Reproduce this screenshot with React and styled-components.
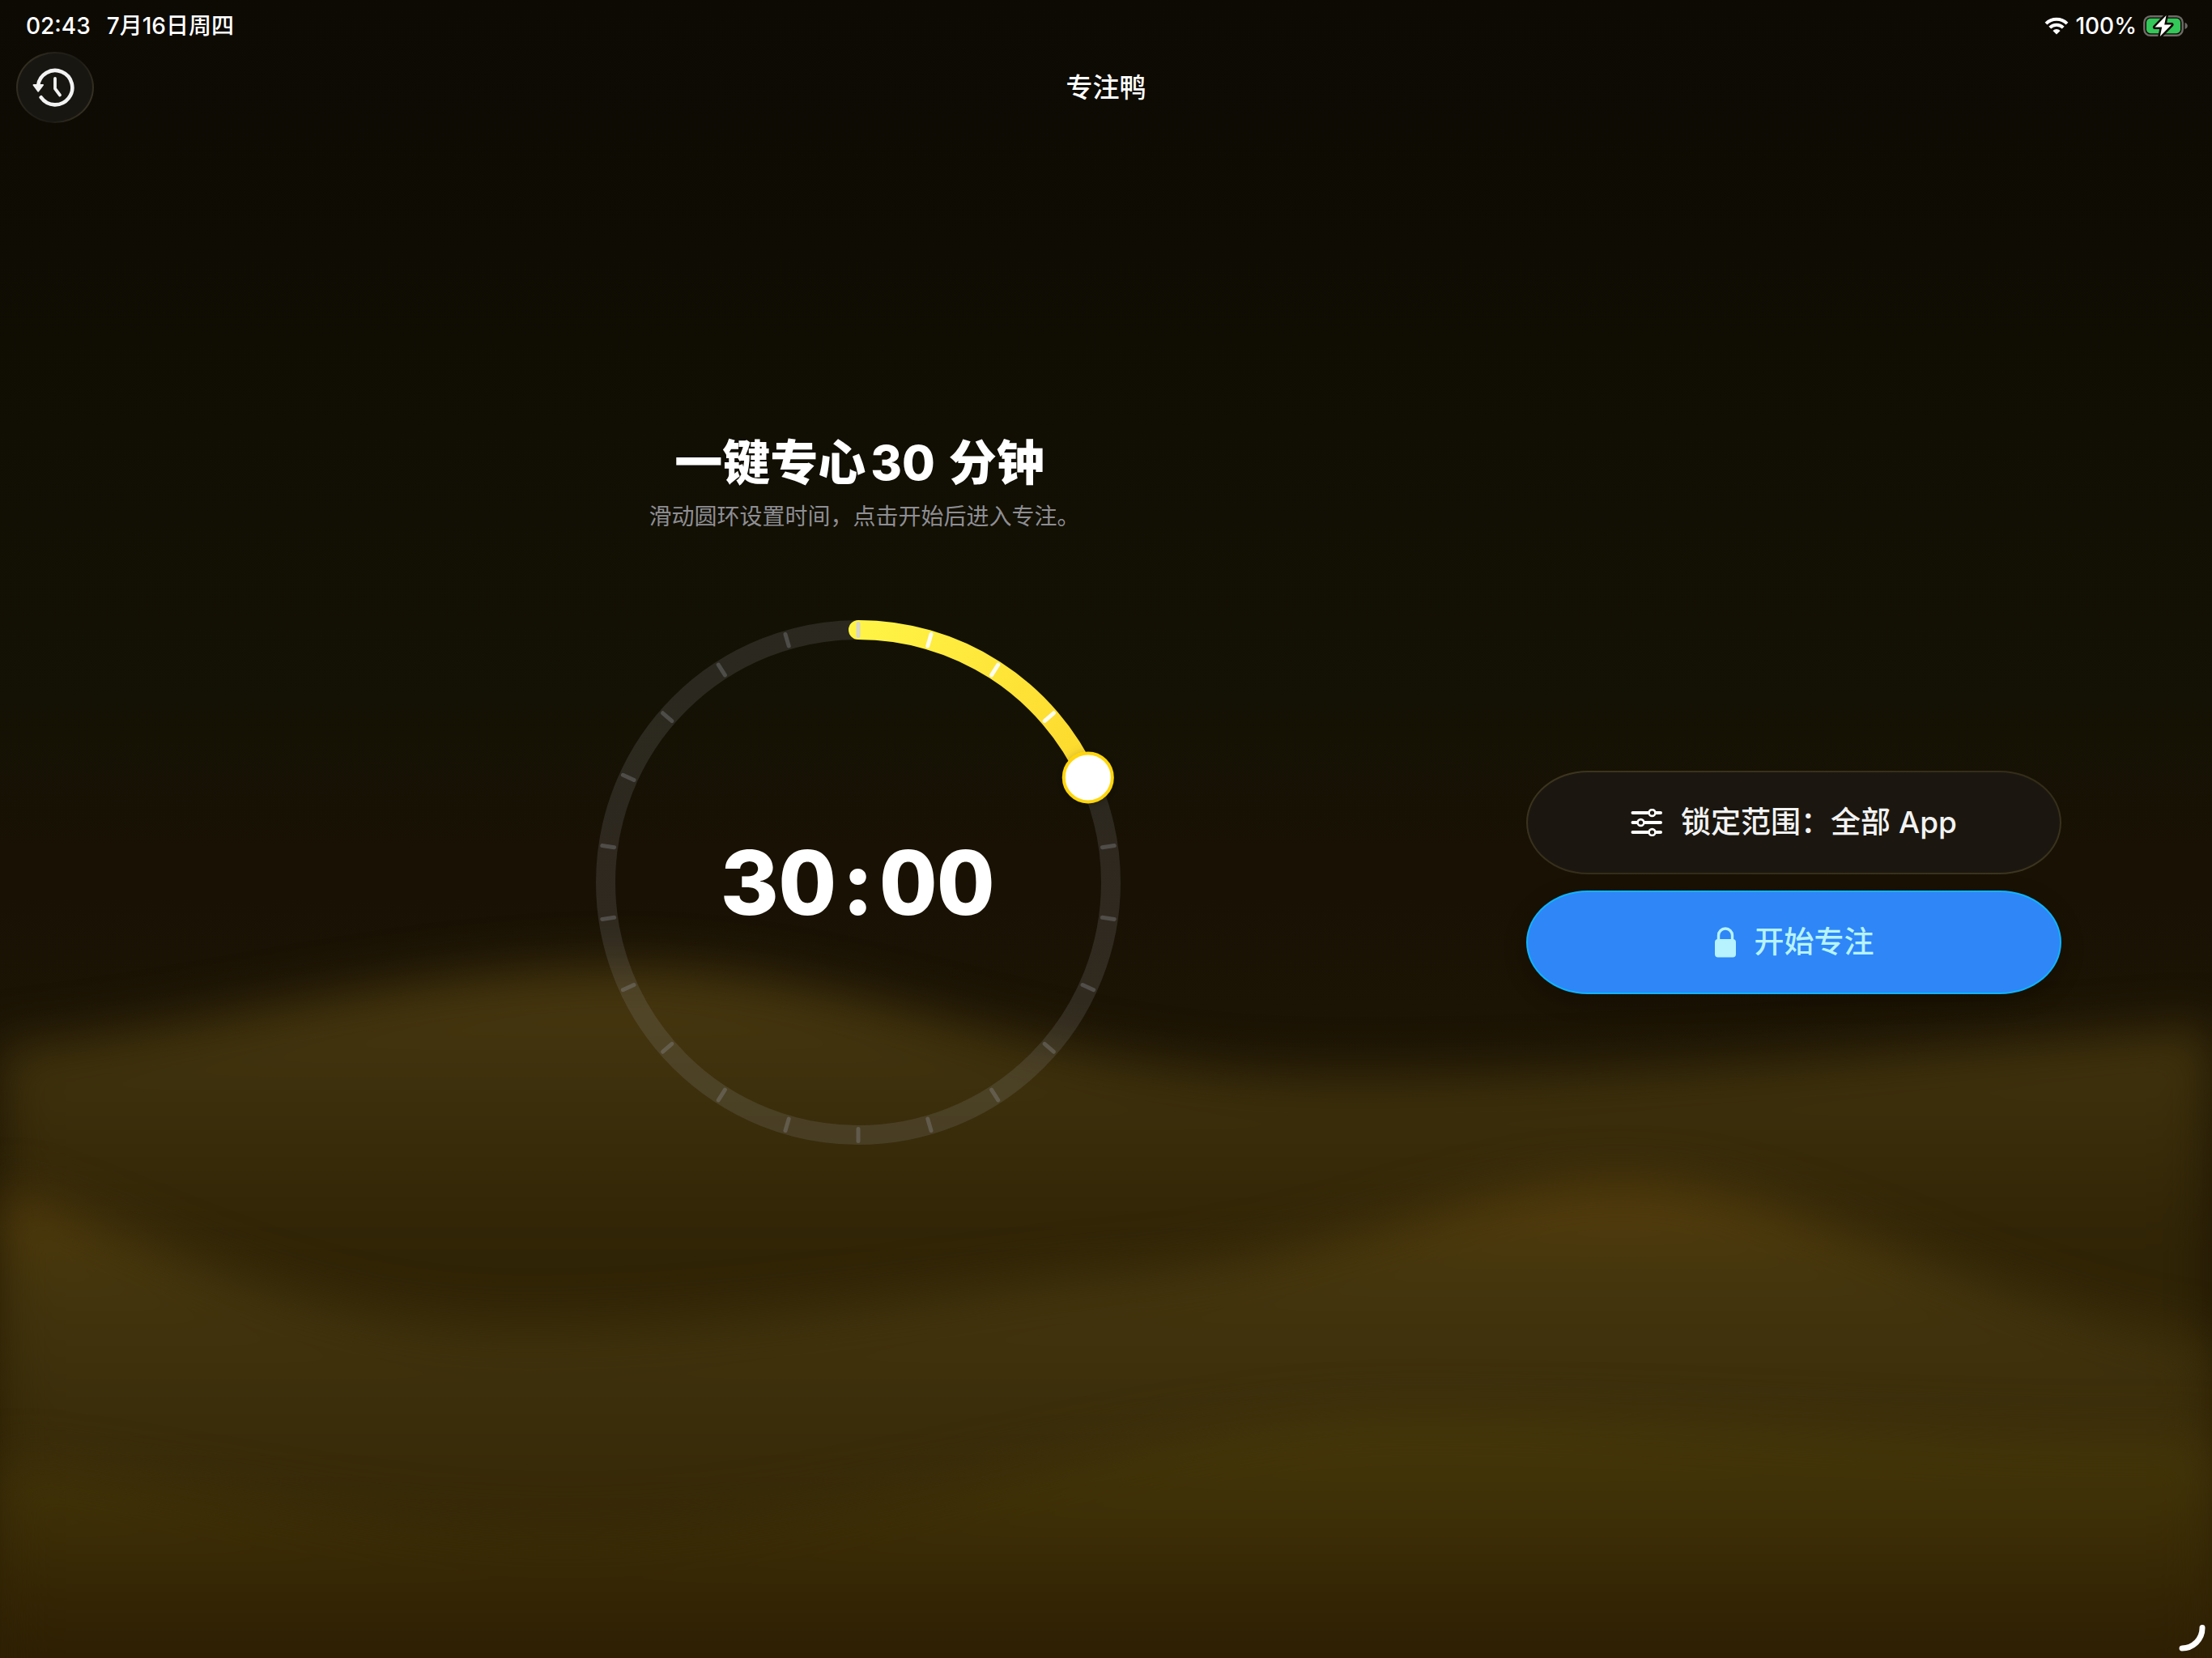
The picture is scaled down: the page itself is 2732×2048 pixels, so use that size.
import { useState } from "react"
import styled, { createGlobalStyle } from "styled-components"

const MIN = 10
const MAX = 120
const STEP = 5
const TICKS = (MAX - MIN) / STEP

const SIZE = 720
const CENTER = SIZE / 2
const RADIUS = 312

const GlobalStyle = createGlobalStyle`
  *, *::before, *::after {
    box-sizing: border-box;
    margin: 0;
  }

  body {
    background-color: #0d0a03;
    color: #fff;
    font-family: Inter, "Noto Sans CJK SC", sans-serif;
  }

  button {
    font: inherit;
    cursor: pointer;
  }
`

const Screen = styled.div`
  position: relative;
  isolation: isolate;
  display: flex;
  flex-direction: column;
  min-height: 100vh;
  padding-bottom: 20px;
  overflow: hidden;
  background: linear-gradient(#0d0a04 0%, #0f0c03 15%, #141204 42%, #181104 51%, #1c1404 64%, #241903 100%);
`

const Backdrop = styled.svg`
  position: absolute;
  inset: 0;
  z-index: -1;
  width: 100%;
  height: 100%;
`

const StatusBar = styled.div`
  display: flex;
  align-items: center;
  justify-content: space-between;
  height: 64px;
  padding: 0 30px 0 32px;
  font-size: 28px;
  font-weight: 500;
  line-height: 32px;
`

const StatusGroup = styled.div`
  display: flex;
  align-items: center;
  gap: ${({ $gap }) => $gap}px;
`

const NavBar = styled.header`
  display: grid;
  grid-template-columns: 1fr auto 1fr;
  align-items: center;
  padding: 0 20px;
`

const NavTitle = styled.h1`
  font-size: 33px;
  font-weight: 500;
  line-height: 40px;
`

const HistoryButton = styled.button`
  display: flex;
  align-items: center;
  justify-content: center;
  width: 96px;
  height: 88px;
  padding: 0;
  border: 2px solid transparent;
  border-radius: 48px / 44px;
  color: #f2f2f2;
  background:
    linear-gradient(#171611, #171611) padding-box,
    linear-gradient(115deg, #3d3626, #24211a 35%, #1c1a14 60%, #423b2a) border-box;
`

const Main = styled.main`
  flex: 1;
  display: grid;
  grid-template-columns: minmax(0, 1fr) 661px;
  grid-template-rows: 1fr auto 1fr;
  align-items: center;
  justify-items: center;
  padding: 0 186px 0 234px;
`

const Intro = styled.div`
  align-self: end;
  padding-bottom: 72px;
  text-align: center;
`

const Heading = styled.h2`
  padding-left: 4px;
  font-size: 59px;
  font-weight: 800;
  line-height: 76px;
`

const Minutes = styled.span`
  margin: 0 4px 0 6px;
`

const Hint = styled.p`
  margin-top: 8px;
  padding-left: 16px;
  color: #8e8e93;
  font-size: 28px;
  line-height: 40px;
`

const Dial = styled.div`
  grid-row: 2;
  position: relative;
  display: grid;
  place-items: center;
`

const DialFace = styled.svg`
  grid-area: 1 / 1;
  display: block;
  width: ${SIZE}px;
  height: ${SIZE}px;
`

const DialInput = styled.input.attrs({ type: 'range' })`
  position: absolute;
  inset: 0;
  width: 100%;
  height: 100%;
  opacity: 0;
  cursor: pointer;
`

const Time = styled.output`
  grid-area: 1 / 1;
  font-size: 110px;
  font-weight: 800;
  line-height: 120px;
  font-feature-settings: "calt" 0, "tnum" 1;
`

const Colon = styled.span`
  margin: 0 12px;
`

const Actions = styled.div`
  grid-row: 2;
  grid-column: 2;
  justify-self: stretch;
  display: flex;
  flex-direction: column;
  gap: 20px;
`

const ActionButton = styled.button`
  display: flex;
  align-items: center;
  justify-content: center;
  gap: 22px;
  height: 128px;
  border: 2px solid transparent;
  border-radius: 76px / 64px;
  font-size: 37px;
  font-weight: 500;
  line-height: 48px;
`

const ScopeButton = styled(ActionButton)`
  color: #f2f2f2;
  background:
    linear-gradient(#1b1710, #1b1710) padding-box,
    linear-gradient(165deg, #3d351f, #332c19 60%, #3d351f) border-box;
`

const StartButton = styled(ActionButton)`
  border-color: #0fb4fd;
  color: #b6f3ff;
  background-color: #2e86f7;
  box-shadow: 0 8px 28px rgba(0, 0, 0, 0.25);
`

const CornerMark = styled.svg`
  position: absolute;
  right: 8px;
  bottom: 8px;
`

function Waves() {
  return (
    <Backdrop viewBox="0 0 1568 1175" preserveAspectRatio="none" aria-hidden="true">
      <defs>
        <linearGradient id="back" gradientUnits="userSpaceOnUse" x1="0" y1="690" x2="0" y2="880">
          <stop offset="0" stopColor="#48380f" />
          <stop offset="0.4" stopColor="#3d300c" />
          <stop offset="1" stopColor="#302406" />
        </linearGradient>
        <linearGradient id="middle" gradientUnits="userSpaceOnUse" x1="0" y1="835" x2="0" y2="1175">
          <stop offset="0" stopColor="#573e0c" />
          <stop offset="0.22" stopColor="#43350d" />
          <stop offset="0.5" stopColor="#3a2d0a" />
          <stop offset="1" stopColor="#302204" />
        </linearGradient>
        <linearGradient id="front" gradientUnits="userSpaceOnUse" x1="0" y1="1005" x2="0" y2="1175">
          <stop offset="0" stopColor="#47390b" />
          <stop offset="0.4" stopColor="#3d2f06" />
          <stop offset="1" stopColor="#2d1e03" />
        </linearGradient>
        <filter id="soft" filterUnits="userSpaceOnUse" x="-60" y="600" width="1690" height="700" colorInterpolationFilters="sRGB">
          <feGaussianBlur stdDeviation="17" />
        </filter>
      </defs>
      <path
        filter="url(#soft)"
        fill="url(#back)"
        d="M0 742C150 728 290 686 440 686C620 686 720 762 950 762C1180 762 1380 742 1568 728V1260H0Z"
      />
      <path
        filter="url(#soft)"
        fill="url(#middle)"
        d="M0 842C110 876 210 940 370 940C540 940 680 912 800 902C960 888 1040 838 1150 838C1280 838 1400 926 1568 950V1260H0Z"
      />
      <path
        filter="url(#soft)"
        fill="url(#front)"
        d="M0 1036C120 1048 260 1084 400 1084C620 1084 800 1004 1000 1004C1200 1004 1400 1022 1568 1018V1260H0Z"
      />
    </Backdrop>
  )
}

function WifiIcon() {
  return (
    <svg width="30" height="22" viewBox="0 0 30 22" fill="none" stroke="#fff" aria-hidden="true">
      <path d="M2 8.200a18.400 18.400 0 0 1 26 0" strokeWidth="4" />
      <path d="M6.800 13.200a11.600 11.600 0 0 1 16.400 0" strokeWidth="4" />
      <path d="M15 21.500L10.400 16.900a6.500 6.500 0 0 1 9.200 0Z" fill="#fff" stroke="none" />
    </svg>
  )
}

function BatteryIcon() {
  return (
    <svg width="55" height="28" viewBox="0 0 55 28" fill="none" aria-hidden="true">
      <rect x="1.300" y="2.200" width="47.400" height="23.600" rx="7.500" stroke="#6e6b66" strokeWidth="2.400" />
      <path d="M51.500 10v8c2-.6 3.300-2.200 3.300-4s-1.300-3.400-3.300-4Z" fill="#6e6b66" />
      <rect x="4" y="4.800" width="42" height="18.400" rx="5" fill="#34c759" />
      <path
        d="M28.500 1L14.500 15.600h8.700L20.800 27L35 12.400h-8.800Z"
        fill="#fff"
        stroke="#0d0a03"
        strokeWidth="5"
        strokeLinejoin="round"
        paintOrder="stroke"
      />
    </svg>
  )
}

function HistoryIcon() {
  return (
    <svg width="56" height="52" viewBox="-28 -26 56 52" fill="none" stroke="currentColor" strokeLinecap="round" strokeLinejoin="round" aria-hidden="true">
      <path d="M-21 -2A21.200 21.200 0 1 1 -17.300 12.300" strokeWidth="4.600" />
      <path d="M-26.500 -3h11.500l-5.800 7.600Z" fill="currentColor" strokeWidth="2" />
      <path d="M0 -11V1.500L6 9.500" strokeWidth="3.800" />
    </svg>
  )
}

function SlidersIcon() {
  const rows = [
    { y: 5, knob: 26.5 },
    { y: 17, knob: 12.5 },
    { y: 29, knob: 26.5 },
  ]

  return (
    <svg width="40" height="34" viewBox="0 0 40 34" fill="#1b1710" stroke="#fff" strokeLinecap="round" aria-hidden="true">
      {rows.map(({ y, knob }) => (
        <g key={y}>
          <path d={`M2.500 ${y}H37`} strokeWidth="4" />
          <circle cx={knob} cy={y} r="3.900" strokeWidth="2.600" />
        </g>
      ))}
    </svg>
  )
}

function LockIcon() {
  return (
    <svg width="28" height="38" viewBox="0 0 28 38" fill="none" aria-hidden="true">
      <path d="M5.500 17V10.500a8.500 8.500 0 0 1 17 0V17" stroke="currentColor" strokeWidth="3.400" />
      <rect x="1" y="15" width="26" height="22.500" rx="4" fill="currentColor" />
    </svg>
  )
}

function pointAt(angle, radius) {
  const rad = (angle * Math.PI) / 180
  return [CENTER + radius * Math.sin(rad), CENTER - radius * Math.cos(rad)]
}

function FocusDial({ minutes, onChange }) {
  const angle = ((minutes - MIN) / (MAX - MIN)) * 360
  const [knobX, knobY] = pointAt(angle, RADIUS)
  const large = angle > 180 ? 1 : 0

  return (
    <Dial>
      <DialFace viewBox={`0 0 ${SIZE} ${SIZE}`} fill="none" aria-hidden="true">
        <defs>
          <linearGradient id="arc" gradientUnits="userSpaceOnUse" x1={CENTER} y1={CENTER - RADIUS} x2={knobX} y2={knobY}>
            <stop offset="0" stopColor="#fff446" />
            <stop offset="1" stopColor="#fdd82c" />
          </linearGradient>
          <filter id="knobShadow" x="-50%" y="-50%" width="200%" height="200%">
            <feDropShadow dx="0" dy="2" stdDeviation="6" floodColor="#000" floodOpacity="0.25" />
          </filter>
        </defs>
        <circle cx={CENTER} cy={CENTER} r={RADIUS} stroke="#8e8e93" strokeOpacity="0.19" strokeWidth="24" />
        <path
          d={`M${CENTER} ${CENTER - RADIUS}A${RADIUS} ${RADIUS} 0 ${large} 1 ${knobX} ${knobY}`}
          stroke="url(#arc)"
          strokeWidth="24"
          strokeLinecap="round"
        />
        {Array.from({ length: TICKS }, (_, i) => {
          const tick = (i * 360) / TICKS
          const active = i > 0 && tick < angle
          const [x1, y1] = pointAt(tick, RADIUS - 7.5)
          const [x2, y2] = pointAt(tick, RADIUS + 7.5)
          const color = i === 0 ? "#d6d6c8" : active ? "#fffdf0" : "rgba(142, 142, 147, 0.36)"
          return <path key={i} d={`M${x1} ${y1}L${x2} ${y2}`} stroke={color} strokeWidth="5" strokeLinecap="round" />
        })}
        <circle cx={knobX} cy={knobY} r="30" fill="#fff" stroke="#ffd60a" strokeWidth="4" filter="url(#knobShadow)" />
      </DialFace>
      <Time htmlFor="focus-minutes">{minutes}<Colon>:</Colon>00</Time>
      <DialInput
        id="focus-minutes"
        aria-label="专注时间"
        min={MIN}
        max={MAX}
        step={STEP}
        value={minutes}
        onChange={e => onChange(Number(e.target.value))}
      />
    </Dial>
  )
}

function App() {
  const [minutes, setMinutes] = useState(30)

  return (
    <Screen>
      <GlobalStyle />
      <Waves />
      <StatusBar>
        <StatusGroup $gap={20}>
          <span>02:43</span>
          <span>7月16日周四</span>
        </StatusGroup>
        <StatusGroup $gap={8}>
          <WifiIcon />
          <span>100%</span>
          <BatteryIcon />
        </StatusGroup>
      </StatusBar>
      <NavBar>
        <HistoryButton type="button" aria-label="历史记录">
          <HistoryIcon />
        </HistoryButton>
        <NavTitle>专注鸭</NavTitle>
      </NavBar>
      <Main>
        <Intro>
          <Heading>一键专心<Minutes>{minutes}</Minutes> 分钟</Heading>
          <Hint>滑动圆环设置时间，点击开始后进入专注。</Hint>
        </Intro>
        <FocusDial minutes={minutes} onChange={setMinutes} />
        <Actions>
          <ScopeButton type="button">
            <SlidersIcon />
            锁定范围：全部 App
          </ScopeButton>
          <StartButton type="button">
            <LockIcon />
            开始专注
          </StartButton>
        </Actions>
      </Main>
      <CornerMark width="36" height="36" viewBox="0 0 36 36" fill="none" aria-hidden="true">
        <path d="M32 6.500A25 25 0 0 1 7 32" stroke="#fff" strokeWidth="7" strokeLinecap="round" />
      </CornerMark>
    </Screen>
  )
}

export default App
